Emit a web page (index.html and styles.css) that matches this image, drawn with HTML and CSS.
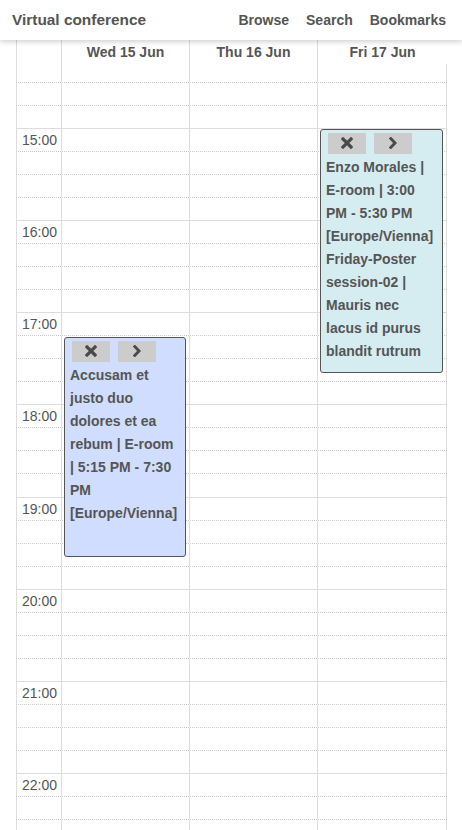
FILE: index.html
```html
<!DOCTYPE html>
<html lang="en">
<head>
<meta charset="utf-8">
<title>Virtual conference</title>
<link rel="stylesheet" href="styles.css">
</head>
<body>
<header class="topbar">
  <div class="brand">Virtual conference</div>
  <nav class="nav">
    <a href="#">Browse</a>
    <a href="#">Search</a>
    <a href="#">Bookmarks</a>
  </nav>
</header>
<main class="calendar">
  <div class="day-head">
    <div class="hcell time"></div>
    <div class="hcell">Wed 15 Jun</div>
    <div class="hcell">Thu 16 Jun</div>
    <div class="hcell last">Fri 17 Jun</div>
  </div>
  <div class="cal-body">
    <div class="cal-scroll">
      <div class="row hour"><div class="cell time"></div><div class="cell"></div><div class="cell"></div><div class="cell"></div></div>
      <div class="row"><div class="cell time"></div><div class="cell"></div><div class="cell"></div><div class="cell"></div></div>
      <div class="row"><div class="cell time"></div><div class="cell"></div><div class="cell"></div><div class="cell"></div></div>
      <div class="row"><div class="cell time"></div><div class="cell"></div><div class="cell"></div><div class="cell"></div></div>
      <div class="row hour"><div class="cell time">15:00</div><div class="cell"></div><div class="cell"></div><div class="cell"></div></div>
      <div class="row"><div class="cell time"></div><div class="cell"></div><div class="cell"></div><div class="cell"></div></div>
      <div class="row"><div class="cell time"></div><div class="cell"></div><div class="cell"></div><div class="cell"></div></div>
      <div class="row"><div class="cell time"></div><div class="cell"></div><div class="cell"></div><div class="cell"></div></div>
      <div class="row hour"><div class="cell time">16:00</div><div class="cell"></div><div class="cell"></div><div class="cell"></div></div>
      <div class="row"><div class="cell time"></div><div class="cell"></div><div class="cell"></div><div class="cell"></div></div>
      <div class="row"><div class="cell time"></div><div class="cell"></div><div class="cell"></div><div class="cell"></div></div>
      <div class="row"><div class="cell time"></div><div class="cell"></div><div class="cell"></div><div class="cell"></div></div>
      <div class="row hour"><div class="cell time">17:00</div><div class="cell"></div><div class="cell"></div><div class="cell"></div></div>
      <div class="row"><div class="cell time"></div><div class="cell"></div><div class="cell"></div><div class="cell"></div></div>
      <div class="row"><div class="cell time"></div><div class="cell"></div><div class="cell"></div><div class="cell"></div></div>
      <div class="row"><div class="cell time"></div><div class="cell"></div><div class="cell"></div><div class="cell"></div></div>
      <div class="row hour"><div class="cell time">18:00</div><div class="cell"></div><div class="cell"></div><div class="cell"></div></div>
      <div class="row"><div class="cell time"></div><div class="cell"></div><div class="cell"></div><div class="cell"></div></div>
      <div class="row"><div class="cell time"></div><div class="cell"></div><div class="cell"></div><div class="cell"></div></div>
      <div class="row"><div class="cell time"></div><div class="cell"></div><div class="cell"></div><div class="cell"></div></div>
      <div class="row hour"><div class="cell time">19:00</div><div class="cell"></div><div class="cell"></div><div class="cell"></div></div>
      <div class="row"><div class="cell time"></div><div class="cell"></div><div class="cell"></div><div class="cell"></div></div>
      <div class="row"><div class="cell time"></div><div class="cell"></div><div class="cell"></div><div class="cell"></div></div>
      <div class="row"><div class="cell time"></div><div class="cell"></div><div class="cell"></div><div class="cell"></div></div>
      <div class="row hour"><div class="cell time">20:00</div><div class="cell"></div><div class="cell"></div><div class="cell"></div></div>
      <div class="row"><div class="cell time"></div><div class="cell"></div><div class="cell"></div><div class="cell"></div></div>
      <div class="row"><div class="cell time"></div><div class="cell"></div><div class="cell"></div><div class="cell"></div></div>
      <div class="row"><div class="cell time"></div><div class="cell"></div><div class="cell"></div><div class="cell"></div></div>
      <div class="row hour"><div class="cell time">21:00</div><div class="cell"></div><div class="cell"></div><div class="cell"></div></div>
      <div class="row"><div class="cell time"></div><div class="cell"></div><div class="cell"></div><div class="cell"></div></div>
      <div class="row"><div class="cell time"></div><div class="cell"></div><div class="cell"></div><div class="cell"></div></div>
      <div class="row"><div class="cell time"></div><div class="cell"></div><div class="cell"></div><div class="cell"></div></div>
      <div class="row hour"><div class="cell time">22:00</div><div class="cell"></div><div class="cell"></div><div class="cell"></div></div>
      <div class="row"><div class="cell time"></div><div class="cell"></div><div class="cell"></div><div class="cell"></div></div>
      <div class="row"><div class="cell time"></div><div class="cell"></div><div class="cell"></div><div class="cell"></div></div>
      <div class="row"><div class="cell time"></div><div class="cell"></div><div class="cell"></div><div class="cell"></div></div>

      <div class="event event-blue" style="left:48px; top:301.1px; width:122px; height:220px;">
        <div class="ev-actions">
          <button class="ev-btn" type="button"><svg width="12" height="12" viewBox="0 0 12 12"><path d="M2 2 L10 10 M10 2 L2 10" stroke="#4a4a4a" stroke-width="3.2" stroke-linecap="square"/></svg></button>
          <button class="ev-btn" type="button"><svg width="8" height="12" viewBox="0 0 8 12"><path d="M1.8 1.6 L6 6 L1.8 10.4" fill="none" stroke="#4a4a4a" stroke-width="2.9" stroke-linecap="square"/></svg></button>
        </div>
        <div class="ev-text">Accusam et justo duo dolores et ea rebum | E-room | 5:15 PM - 7:30 PM [Europe/Vienna]</div>
      </div>

      <div class="event event-cyan" style="left:304px; top:93.1px; width:123px; height:244px;">
        <div class="ev-actions">
          <button class="ev-btn" type="button"><svg width="12" height="12" viewBox="0 0 12 12"><path d="M2 2 L10 10 M10 2 L2 10" stroke="#4a4a4a" stroke-width="3.2" stroke-linecap="square"/></svg></button>
          <button class="ev-btn" type="button"><svg width="8" height="12" viewBox="0 0 8 12"><path d="M1.8 1.6 L6 6 L1.8 10.4" fill="none" stroke="#4a4a4a" stroke-width="2.9" stroke-linecap="square"/></svg></button>
        </div>
        <div class="ev-text">Enzo Morales | E-room | 3:00 PM - 5:30 PM [Europe/Vienna]</div>
        <div class="ev-text">Friday-Poster session-02 | Mauris nec lacus id purus blandit rutrum</div>
      </div>
    </div>
  </div>
</main>
</body>
</html>
```
FILE: styles.css
```css
* { box-sizing: border-box; }

html, body {
  margin: 0;
  padding: 0;
  background: #fff;
  height: 830px;
  overflow: hidden;
}

body {
  font-family: "Liberation Sans", Arial, sans-serif;
  color: #555;
}

.topbar {
  position: relative;
  z-index: 5;
  height: 40px;
  display: flex;
  align-items: center;
  justify-content: space-between;
  padding: 0 16px 0 12px;
  background: #fff;
  box-shadow: 0 2px 5px rgba(0, 0, 0, 0.18);
}

.brand {
  font-size: 15.4px;
  font-weight: bold;
  color: #555;
}

.nav {
  display: flex;
  gap: 17px;
}

.nav a {
  font-size: 14px;
  font-weight: bold;
  color: #555;
  text-decoration: none;
}

.calendar {
  margin-left: 16px;
  width: 431px;
}

.day-head {
  display: grid;
  grid-template-columns: 45px 128px 128px 129px;
  height: 24px;
  border-left: 1px solid #ddd;
  background: #fff;
}

.hcell {
  border-right: 1px solid #ddd;
  font-size: 14px;
  font-weight: bold;
  line-height: 24px;
  text-align: center;
  color: #555;
}

.hcell.last { border-right: none; }

.cal-body {
  height: 766px;
  overflow: hidden;
}

.cal-scroll {
  position: relative;
  margin-top: -28.14px;
}

.row {
  display: grid;
  grid-template-columns: 45px 128px 128px 129px;
  height: 23.036px;
  border-left: 1px solid #ddd;
  border-top: 1px dotted #ccc;
}

.row.hour {
  border-top: 1px solid #ddd;
}

.cell {
  border-right: 1px solid #ddd;
}

.cell.time {
  font-size: 14px;
  line-height: 16px;
  padding: 3px 0 0 5px;
  color: #555;
  white-space: nowrap;
}

.event {
  position: absolute;
  z-index: 2;
  border: 1px solid #555;
  border-radius: 3px;
  padding: 3px 5px;
  overflow: hidden;
}

.event-blue { background: #d0ddff; }
.event-cyan { background: #d5ecf1; }

.ev-actions {
  display: flex;
  gap: 8px;
  margin-left: 2px;
  padding-bottom: 2px;
}

.ev-btn {
  width: 38px;
  height: 21px;
  padding: 0;
  margin: 0;
  border: none;
  border-radius: 0;
  background: #ccc;
  display: flex;
  align-items: center;
  justify-content: center;
}

.ev-text {
  font-size: 14px;
  font-weight: bold;
  line-height: 23px;
  color: #555;
}
```
